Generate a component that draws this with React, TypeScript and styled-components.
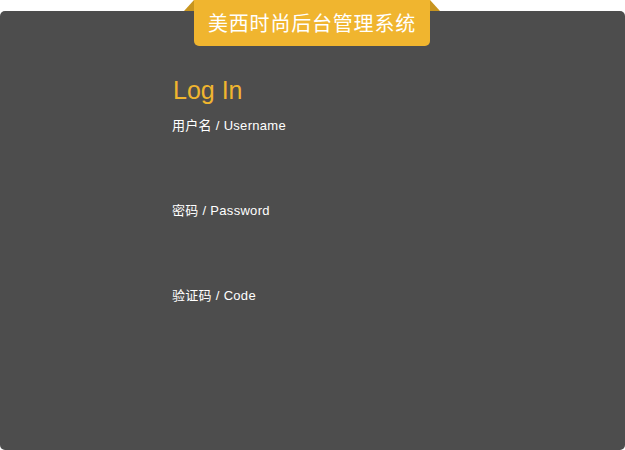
import styled, { createGlobalStyle } from "styled-components"

const Global = createGlobalStyle`
html, body {
  margin: 0;
  padding: 0;
  background: #ffffff;
}
`

const fields = [
  { label: "用户名 / Username", type: "text" },
  { label: "密码 / Password", type: "password" },
  { label: "验证码 / Code", type: "text" },
]

const App = () => {
  return (
    <Page>
      <Global />
      <Panel>
        <Ribbon>
          <Fold side="left" />
          <RibbonText>美西时尚后台管理系统</RibbonText>
          <Fold side="right" />
        </Ribbon>
        <Form>
          <Title>Log In</Title>
          {fields.map((f) => (
            <Field key={f.label}>
              <Label>{f.label}</Label>
              <Input type={f.type} />
            </Field>
          ))}
        </Form>
      </Panel>
    </Page>
  )
}

export default App

const Page = styled.div`
width: 625px;
height: 450px;
padding-top: 11px;
box-sizing: border-box;
position: relative;
`

const Panel = styled.div`
height: 439px;
background-color: #4d4d4d;
border-radius: 5px;
`

const Ribbon = styled.div`
position: absolute;
top: 0;
left: 184px;
display: flex;
`

const Fold = styled.div<{ side: "left" | "right" }>`
width: 0;
height: 0;
border-top: 11px solid transparent;
${(p) =>
  p.side === "left"
    ? "border-right: 10px solid #c8951f;"
    : "border-left: 10px solid #c8951f;"}
`

const RibbonText = styled.div`
width: 236px;
height: 46px;
background-color: #f0b52f;
border-radius: 0 0 5px 5px;
color: #ffffff;
font-family: "Noto Sans CJK SC", sans-serif;
font-size: 20px;
letter-spacing: 0.8px;
line-height: 46px;
text-align: center;
`

const Form = styled.div`
padding: 65px 0 0 172px;
width: 280px;
display: flex;
flex-direction: column;
`

const Title = styled.div`
color: #f0b52f;
font-family: "Liberation Sans", Lato, sans-serif;
font-size: 25px;
line-height: 28px;
font-weight: 400;
margin-left: 1px;
margin-bottom: 14px;
`

const Field = styled.div`
display: flex;
flex-direction: column;
height: 85px;
`

const Label = styled.div`
color: #ffffff;
font-family: "Liberation Sans", "Noto Sans CJK SC", sans-serif;
font-size: 13px;
line-height: 16px;
letter-spacing: 0.3px;
`

const Input = styled.input`
margin-top: 8px;
height: 40px;
background: transparent;
border: none;
outline: none;
color: #ffffff;
`
